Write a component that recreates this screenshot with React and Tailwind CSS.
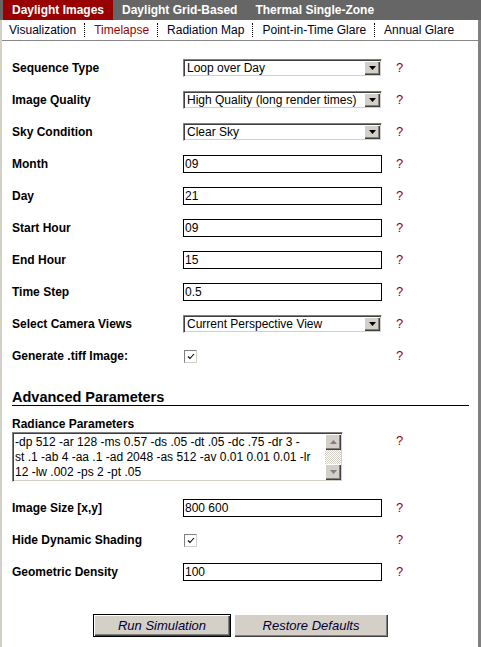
import React from 'react';

const font = "font-['Liberation_Sans',Arial,sans-serif]";

function Help({ className = '' }) {
  return <span className={`text-[13px] leading-[14px] text-[#990000] ${className}`}>?</span>;
}

function Select({ value }) {
  return (
    <div className="relative flex h-[18px] w-[199px] items-center border border-t-[#808080] border-l-[#808080] border-r-white border-b-white bg-white shadow-[inset_1px_1px_0_#404040,inset_-1px_-1px_0_#d4d0c8]">
      <span className="pl-[3px] text-[12px] leading-[14px] whitespace-nowrap">{value}</span>
      <div className="absolute top-[1px] right-[1px] flex h-[14px] w-[16px] items-center justify-center bg-[#d4d0c8] shadow-[inset_1px_1px_0_#fff,inset_-1px_-1px_0_#404040,inset_-2px_-2px_0_#808080]">
        <svg width="7" height="4" viewBox="0 0 7 4">
          <polygon points="0,0 7,0 3.5,4" fill="#000" />
        </svg>
      </div>
    </div>
  );
}

function TextBox({ value }) {
  return (
    <div className="flex h-[18px] w-[199px] items-center border border-black bg-white pl-[1px] text-[12px] leading-[14px]">
      {value}
    </div>
  );
}

function Check() {
  return (
    <div className="ml-[1px] flex h-[13px] w-[13px] items-center justify-center border border-t-[#808080] border-l-[#808080] border-r-[#d4d0c8] border-b-[#d4d0c8] bg-white">
      <svg width="8" height="7" viewBox="0 0 8 7">
        <polyline points="1,3.5 3,5.5 7,1" fill="none" stroke="#000" strokeWidth="1.1" />
      </svg>
    </div>
  );
}

function Row({ label, children }) {
  return (
    <div className="flex h-[32px] items-center">
      <div className="w-[171px] text-[12px] font-bold leading-[14px]">{label}</div>
      <div className="w-[199px]">{children}</div>
      <Help className="ml-[14px]" />
    </div>
  );
}

function ScrollArrow({ up }) {
  return (
    <div className="flex h-[16px] w-[16px] items-center justify-center bg-[#d4d0c8] shadow-[inset_1px_1px_0_#fff,inset_-1px_-1px_0_#404040,inset_-2px_-2px_0_#808080]">
      <svg width="7" height="4" viewBox="0 0 7 4">
        <polygon points={up ? '0,4 7,4 3.5,0' : '0,0 7,0 3.5,4'} fill="#808080" />
      </svg>
    </div>
  );
}

export default function App() {
  const tabs = ['Daylight Images', 'Daylight Grid-Based', 'Thermal Single-Zone'];
  const subTabs = ['Visualization', 'Timelapse', 'Radiation Map', 'Point-in-Time Glare', 'Annual Glare'];

  return (
    <div className={`h-[647px] w-[481px] overflow-hidden bg-white text-black ${font}`}>
      {/* top tabs */}
      <div className="flex h-[20px] items-center bg-[#666666] pl-[3px]">
        {tabs.map((t, i) => (
          <div
            key={t}
            className={`flex h-[20px] items-center px-[9px] text-[12px] font-bold text-white ${i === 0 ? 'bg-[#990000]' : ''}`}
          >
            {t}
          </div>
        ))}
      </div>

      <div className="flex h-[627px] flex-col border-l-[2px] border-r-[3px] border-l-[#d4d0c8] border-r-[#808080]">
        {/* sub tabs */}
        <div className="flex h-[21px] items-center border-b border-[#888888] pl-[7px]">
          {subTabs.map((t, i) => (
            <div key={t} className="flex items-center">
              {i > 0 && <span className="h-[14px] border-l border-dotted border-black" />}
              <span
                className={`${i === 0 ? 'pr-[8px]' : 'pl-[9px] pr-[8px]'} text-[12px] leading-[14px] ${i === 1 ? 'text-[#990000]' : 'text-[#000022]'}`}
              >
                {t}
              </span>
            </div>
          ))}
        </div>

        {/* form */}
        <div className="flex flex-col pl-[10px] pt-[11px]">
          <Row label="Sequence Type"><Select value="Loop over Day" /></Row>
          <Row label="Image Quality"><Select value="High Quality (long render times)" /></Row>
          <Row label="Sky Condition"><Select value="Clear Sky" /></Row>
          <Row label="Month"><TextBox value="09" /></Row>
          <Row label="Day"><TextBox value="21" /></Row>
          <Row label="Start Hour"><TextBox value="09" /></Row>
          <Row label="End Hour"><TextBox value="15" /></Row>
          <Row label="Time Step"><TextBox value="0.5" /></Row>
          <Row label="Select Camera Views"><Select value="Current Perspective View" /></Row>
          <Row label="Generate .tiff Image:"><Check /></Row>

          <div className="mt-[17px] h-[17px] w-[457px] border-b border-black text-[14.5px] font-bold leading-[16px]">
            Advanced Parameters
          </div>

          <div className="mt-[11px] text-[12px] font-bold leading-[14px]">Radiance Parameters</div>
          <div className="mt-[1px] flex items-start">
            <div className="flex h-[50px] w-[331px] border border-t-[#808080] border-l-[#808080] border-r-white border-b-white bg-white shadow-[inset_1px_1px_0_#404040,inset_-1px_-1px_0_#d4d0c8]">
              <div className="flex-1 pl-[2px] pt-[2px] text-[12px] leading-[15px] whitespace-nowrap">
                <div>-dp 512 -ar 128 -ms 0.57 -ds .05 -dt .05 -dc .75 -dr 3 -</div>
                <div>st .1 -ab 4 -aa .1 -ad 2048 -as 512 -av 0.01 0.01 0.01 -lr</div>
                <div>12 -lw .002 -ps 2 -pt .05</div>
              </div>
              <div className="my-[1px] mr-[1px] flex w-[16px] flex-col justify-between bg-[repeating-conic-gradient(#d4d0c8_0_25%,#ffffff_0_50%)] bg-[length:2px_2px]">
                <ScrollArrow up />
                <ScrollArrow />
              </div>
            </div>
            <Help className="ml-[53px] mt-[2px]" />
          </div>

          <div className="mt-[10px] flex flex-col">
            <Row label="Image Size [x,y]"><TextBox value="800 600" /></Row>
            <Row label="Hide Dynamic Shading"><Check /></Row>
            <Row label="Geometric Density"><TextBox value="100" /></Row>
          </div>

          <div className="ml-[81px] mt-[26px] flex gap-[3px]">
            <button className="h-[23px] w-[138px] border border-black bg-[#d4d0c8] text-[13px] italic text-[#000033] shadow-[inset_1px_1px_0_#fff,inset_-1px_-1px_0_#404040,inset_-2px_-2px_0_#808080]">
              Run Simulation
            </button>
            <button className="h-[23px] w-[154px] bg-[#d4d0c8] text-[13px] italic text-[#000033] shadow-[inset_1px_1px_0_#fff,inset_-1px_-1px_0_#404040,inset_-2px_-2px_0_#808080]">
              Restore Defaults
            </button>
          </div>
        </div>
      </div>
    </div>
  );
}
